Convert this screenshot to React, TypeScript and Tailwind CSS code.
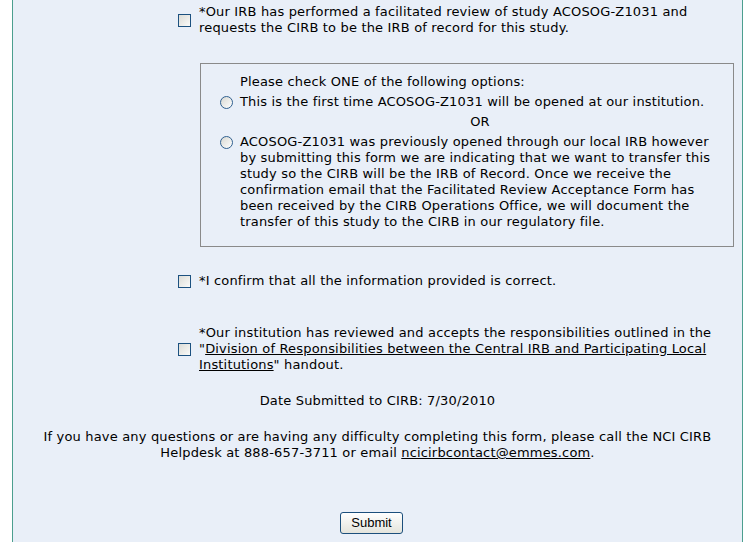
import React from "react";

// Facilitated review acceptance form (bottom part of the page)

const FONT = "font-['DejaVu_Sans',Verdana,sans-serif]";

function CheckBox() {
  return (
    <span className="block h-[13px] w-[13px] shrink-0 border border-[#1c5180] bg-gradient-to-br from-[#dcdcd7] to-[#fbfbf9]" />
  );
}

function Radio() {
  return (
    <span className="block h-[13px] w-[13px] shrink-0 rounded-full border border-[#2f5f8f] bg-gradient-to-br from-[#d8d8d2] to-[#ffffff]" />
  );
}

function CheckRow({ children, className = "" }: { children: React.ReactNode; className?: string }) {
  return (
    <div className={`flex items-center ${className}`}>
      <div className="ml-[165px] mr-[8px]">
        <CheckBox />
      </div>
      <div className="w-[535px]">{children}</div>
    </div>
  );
}

export default function App() {
  return (
    <div
      className={`h-[542px] w-[755px] overflow-hidden bg-white text-[13px] leading-[16px] tracking-[0.17px] text-black ${FONT}`}
    >
      <div className="ml-[12px] h-full w-[731px] border-l border-r border-[#4c9f8f] bg-[#e9eff8]">
        <CheckRow className="pt-[4px]">
          *Our IRB has performed a facilitated review of study ACOSOG-Z1031 and requests the CIRB to be the IRB of
          record for this study.
        </CheckRow>

        {/* options box */}
        <div className="ml-[187px] mt-[27px] w-[534px] border border-[#8a8a8a] pb-[16px] pt-[8px]">
          <div className="flex">
            <div className="w-[39px]" />
            <div className="w-[480px] leading-[20px]">Please check ONE of the following options:</div>
          </div>
          <div className="flex items-center">
            <div className="ml-[19px] w-[20px]">
              <Radio />
            </div>
            <div className="w-[480px] leading-[20px]">
              This is the first time ACOSOG-Z1031 will be opened at our institution.
            </div>
          </div>
          <div className="flex">
            <div className="w-[39px]" />
            <div className="w-[480px] text-center leading-[20px]">OR</div>
          </div>
          <div className="mt-[2px] flex items-start">
            <div className="ml-[19px] w-[20px] pt-[2px]">
              <Radio />
            </div>
            <div className="w-[480px]">
              ACOSOG-Z1031 was previously opened through our local IRB however by submitting this form we are
              indicating that we want to transfer this study so the CIRB will be the IRB of Record. Once we receive the
              confirmation email that the Facilitated Review Acceptance Form has been received by the CIRB Operations
              Office, we will document the transfer of this study to the CIRB in our regulatory file.
            </div>
          </div>
        </div>

        <CheckRow className="mt-[26px]">*I confirm that all the information provided is correct.</CheckRow>

        <CheckRow className="mt-[36px]">
          *Our institution has reviewed and accepts the responsibilities outlined in the "
          <a className="underline">Division of Responsibilities between the Central IRB and Participating Local Institutions</a>
          " handout.
        </CheckRow>

        <p className="mt-[20px] text-center">Date Submitted to CIRB: 7/30/2010</p>

        <p className="mx-auto mt-[20px] w-[700px] text-center">
          If you have any questions or are having any difficulty completing this form, please call the NCI CIRB Helpdesk
          at 888-657-3711 or email <a className="underline">ncicirbcontact@emmes.com</a>.
        </p>

        <div className="mt-[51px] pl-[327px]">
          <button className="h-[22px] w-[63px] rounded-[3px] border border-[#1c4f7c] bg-gradient-to-b from-white to-[#e4e4dc] font-['Liberation_Sans',Arial,sans-serif] text-[13px] leading-[20px] tracking-normal text-black">
            Submit
          </button>
        </div>
      </div>
    </div>
  );
}
